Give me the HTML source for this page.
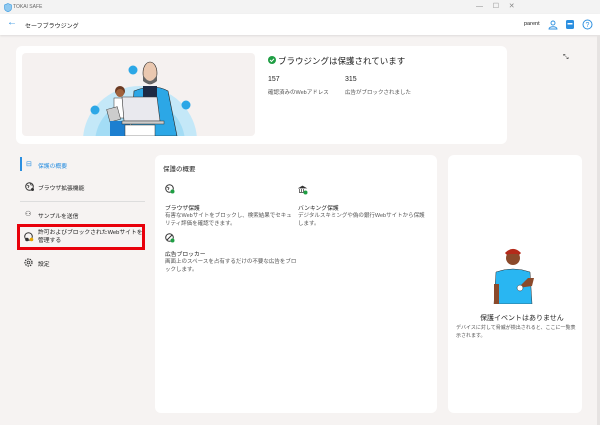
<!DOCTYPE html>
<html><head><meta charset="utf-8"><style>
*{margin:0;padding:0;box-sizing:border-box}
body{width:600px;height:425px;overflow:hidden;background:#f6f3f2;font-family:"Liberation Sans","Noto Sans CJK JP",sans-serif;color:#222;position:relative}
.a{position:absolute}
.t{font-size:6.5px;white-space:nowrap}
.s{font-size:5.5px;color:#555;line-height:8px}
</style></head><body>
<div class="a" style="left:0;top:0;width:600px;height:14px;background:#f3f3f3"></div>
<svg class="a" style="left:4px;top:3px" width="8" height="9"><path d="M4 0.5L7.5 2v3c0 2-1.6 3.2-3.5 3.8C2.1 8.2 0.5 7 0.5 5V2z" fill="#8fc9f0" stroke="#3a9ae0" stroke-width=".6"/></svg>
<div class="a t" style="left:13px;top:4px;font-size:5px;color:#666">TOKAI SAFE</div>
<div class="a t" style="left:476px;top:2px;color:#888;font-size:7px">—&nbsp;&nbsp;&nbsp;&nbsp;&nbsp;☐&nbsp;&nbsp;&nbsp;&nbsp;&nbsp;✕</div>
<div class="a" style="left:0;top:14px;width:600px;height:21px;background:#fff;box-shadow:0 1px 2px rgba(0,0,0,.1)"></div>
<div class="a t" style="left:7px;top:17px;color:#2b8fe0;font-size:10px">←</div>
<div class="a t" style="left:25px;top:21px;font-size:6px">セーフブラウジング</div>
<div class="a t" style="left:524px;top:21px;font-size:5.5px">parent</div>
<svg class="a" style="left:548px;top:20px" width="10" height="10"><circle cx="5" cy="3" r="2" fill="none" stroke="#2b8fe0" stroke-width=".9"/><path d="M1 9c0-3 8-3 8 0z" fill="none" stroke="#2b8fe0" stroke-width=".9"/></svg>
<svg class="a" style="left:565px;top:19px" width="10" height="11"><rect x="1" y="1" width="8" height="9" rx="1.5" fill="#2b8fe0"/><rect x="2.5" y="4" width="5" height="1.5" fill="#fff"/></svg>
<svg class="a" style="left:582px;top:19px" width="11" height="11"><circle cx="5.5" cy="5.5" r="4.5" fill="none" stroke="#2b8fe0" stroke-width="1"/><text x="3.5" y="8" font-size="7" fill="#2b8fe0" font-family="Liberation Sans">?</text></svg>

<div class="a" style="left:16px;top:46px;width:491px;height:98px;background:#fff;border-radius:6px"></div>
<div class="a" style="left:22px;top:53px;width:233px;height:83px;background:#f5f1f0;border-radius:4px;overflow:hidden">
<svg width="233" height="83">
<ellipse cx="118" cy="88" rx="57" ry="55" fill="#c4e8f8"/><ellipse cx="118" cy="90" rx="45" ry="44" fill="#a3dcf5"/>
<path d="M112 38q20-8 34 0l9 45h-46z" fill="#2ca7e6" stroke="#222" stroke-width=".6"/>
<rect x="121" y="33" width="14" height="30" fill="#1d2a44"/>
<ellipse cx="128" cy="20" rx="7" ry="11" fill="#eac8b0" stroke="#222" stroke-width=".6"/>
<path d="M121 22q7 12 14 0v6q-7 6-14 0z" fill="#666"/>
<circle cx="98" cy="38" r="5" fill="#6b3a22"/><circle cx="98" cy="40" r="4" fill="#a0623c"/>
<rect x="92" y="45" width="13" height="20" fill="#fff" stroke="#333" stroke-width=".5"/>
<rect x="86" y="55" width="11" height="13" fill="#ccc" stroke="#333" stroke-width=".5" transform="rotate(-15 91 61)"/>
<rect x="88" y="68" width="20" height="15" fill="#1d7fd0"/>
<path d="M102 68h36l-3-24h-35z" fill="#e9e9ee" stroke="#333" stroke-width=".6"/>
<rect x="100" y="68" width="42" height="3" fill="#ccc" stroke="#333" stroke-width=".5"/>
<rect x="103" y="72" width="30" height="11" fill="#fff" stroke="#333" stroke-width=".5"/>
<circle cx="164" cy="52" r="4.5" fill="#2ca7e6"/><circle cx="111" cy="17" r="4.5" fill="#2ca7e6"/><circle cx="73" cy="57" r="4.5" fill="#2ca7e6"/>
</svg></div>
<svg class="a" style="left:268px;top:56px" width="8" height="8"><circle cx="4" cy="4" r="4" fill="#1f9e44"/><path d="M2 4l1.5 1.5L6 2.8" stroke="#fff" fill="none" stroke-width="1"/></svg>
<div class="a t" style="left:278px;top:55px;font-size:8.5px">ブラウジングは保護されています</div>
<div class="a t" style="left:563px;top:54px;font-size:7px;color:#333">⤡</div>
<div class="a t" style="left:268px;top:76px;font-size:7px">157</div>
<div class="a t" style="left:268px;top:88px;font-size:5.5px;color:#555">確認済みのWebアドレス</div>
<div class="a t" style="left:345px;top:76px;font-size:7px">315</div>
<div class="a t" style="left:345px;top:88px;font-size:5.5px;color:#555">広告がブロックされました</div>

<div class="a" style="left:20px;top:157px;width:2px;height:14px;background:#2b8fe0"></div>
<div class="a t" style="left:26px;top:160px;color:#2b8fe0;font-size:7px">⊟</div>
<div class="a t" style="left:38px;top:161px;font-size:5.8px;color:#2b8fe0">保護の概要</div>
<svg class="a" style="left:25px;top:182px" width="9" height="9"><circle cx="4.5" cy="4.5" r="3.8" fill="none" stroke="#333"/><path d="M2 3l2 1-1 2M5 1l1 2 2 0" stroke="#333" fill="none" stroke-width=".8"/><circle cx="7.5" cy="7.5" r="1.5" fill="#333"/></svg>
<div class="a t" style="left:38px;top:183px;font-size:5.8px">ブラウザ拡張機能</div>
<div class="a" style="left:20px;top:201px;width:125px;height:1px;background:#ddd"></div>
<div class="a t" style="left:25px;top:210px;font-size:7px">⚇</div>
<div class="a t" style="left:38px;top:211px;font-size:5.8px">サンプルを送信</div>
<div class="a" style="left:17px;top:224px;width:128px;height:26px;border:3px solid #e8000b;background:#f6f3f2"></div>
<svg class="a" style="left:24px;top:232px" width="10" height="10"><circle cx="4.5" cy="4.5" r="3.8" fill="none" stroke="#333"/><circle cx="3" cy="7.5" r="1.8" fill="#333"/><circle cx="7.5" cy="7.5" r="1.8" fill="#e3a400"/></svg>
<div class="a" style="left:38px;top:229px;font-size:5.8px;line-height:8px;width:105px">許可およびブロックされたWebサイトを管理する</div>
<svg class="a" style="left:24px;top:258px" width="9" height="9"><circle cx="4.5" cy="4.5" r="3.5" fill="none" stroke="#333" stroke-width="1.2" stroke-dasharray="1.5 1"/><circle cx="4.5" cy="4.5" r="1.4" fill="none" stroke="#333" stroke-width=".8"/></svg>
<div class="a t" style="left:38px;top:259px;font-size:5.8px">設定</div>

<div class="a" style="left:155px;top:155px;width:282px;height:258px;background:#fff;border-radius:6px"></div>
<div class="a t" style="left:163px;top:163px;font-size:6.5px">保護の概要</div>
<svg class="a" style="left:165px;top:184px" width="10" height="10"><circle cx="4.5" cy="4.5" r="3.8" fill="none" stroke="#333"/><path d="M2 3l2 1-1 2" stroke="#333" fill="none" stroke-width=".8"/><circle cx="7.5" cy="7.5" r="2" fill="#1f9e44"/></svg>
<div class="a t" style="left:165px;top:203px;font-size:5.8px">ブラウザ保護</div>
<div class="a s" style="left:165px;top:212px;width:132px">有害なWebサイトをブロックし、検索結果でセキュリティ評価を確認できます。</div>
<svg class="a" style="left:165px;top:233px" width="10" height="10"><circle cx="4.5" cy="4.5" r="3.8" fill="none" stroke="#333"/><path d="M2 7L7 2" stroke="#333"/><circle cx="7.5" cy="7.5" r="2" fill="#1f9e44"/></svg>
<div class="a t" style="left:165px;top:249px;font-size:5.8px">広告ブロッカー</div>
<div class="a s" style="left:165px;top:258px;width:132px">画面上のスペースを占有するだけの不要な広告をブロックします。</div>
<svg class="a" style="left:298px;top:185px" width="10" height="10"><path d="M1 3L4.5 1 8 3z M1.5 4v3M3.5 4v3M5.5 4v3M1 7.5h6" stroke="#333" fill="#333" stroke-width=".7"/><circle cx="7.5" cy="7.5" r="2" fill="#1f9e44"/></svg>
<div class="a t" style="left:298px;top:203px;font-size:5.8px">バンキング保護</div>
<div class="a s" style="left:298px;top:212px;width:130px">デジタルスキミングや偽の銀行Webサイトから保護します。</div>

<div class="a" style="left:448px;top:155px;width:134px;height:258px;background:#fff;border-radius:6px"></div>
<svg class="a" style="left:488px;top:248px" width="52" height="56"><circle cx="25" cy="10" r="7" fill="#8b4a2b"/><path d="M18 6q7-7 14 0" fill="#b42a1a" stroke="#b42a1a" stroke-width="3"/><path d="M8 24q17-6 34 0l2 32H6z" fill="#29b6f2" stroke="#333" stroke-width=".5"/><path d="M30 40l14-2 2-8-6 0" fill="#8b4a2b"/><circle cx="32" cy="40" r="3" fill="#fff" stroke="#333" stroke-width=".5"/><rect x="6" y="36" width="5" height="20" fill="#8b4a2b"/></svg>
<div class="a t" style="left:480px;top:313px;font-size:7px">保護イベントはありません</div>
<div class="a" style="left:456px;top:325px;font-size:5px;color:#555;line-height:7.5px;width:122px">デバイスに対して脅威が検出されると、ここに一覧表示されます。</div>
<div class="a" style="left:597px;top:35px;width:3px;height:390px;background:#e6e3e2"></div>
</body></html>
